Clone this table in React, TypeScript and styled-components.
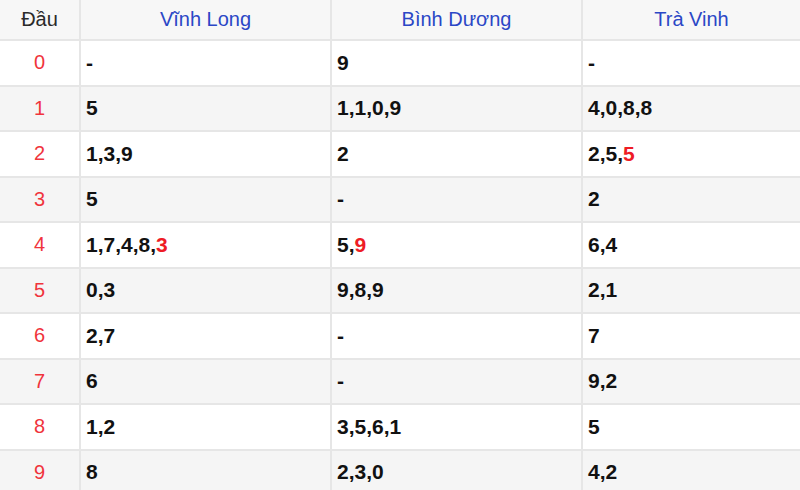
import React from "react";
import styled, { createGlobalStyle } from "styled-components";

const Global = createGlobalStyle`
  html, body { margin: 0; padding: 0; background: #fff; }
  body { font-family: "Liberation Sans", Arial, sans-serif; }
`;

const Table = styled.table`
  width: 800px;
  border-collapse: collapse;
  table-layout: fixed;
  font-family: "Liberation Sans", Arial, sans-serif;
`;

const HeadRow = styled.tr`
  background: #f7f7f7;
  height: 40px;
`;

const HeadCell = styled.th<{ $plain?: boolean }>`
  font-weight: normal;
  font-size: 20px;
  color: ${(p) => (p.$plain ? "#2a2a2a" : "#2b47c6")};
  text-align: center;
  padding: 0;
  border: 2px solid #e6e6e6;
  border-top: none;
  &:first-child { border-left: none; }
  &:last-child { border-right: none; }
`;

const Row = styled.tr<{ $striped: boolean }>`
  background: ${(p) => (p.$striped ? "#f5f5f5" : "#fff")};
  height: 45.5px;
`;

const KeyCell = styled.td`
  text-align: center;
  font-size: 20px;
  color: #f0343c;
  padding: 0;
  border: 2px solid #e6e6e6;
  border-left: none;
`;

const ValueCell = styled.td`
  font-size: 21px;
  font-weight: bold;
  color: #111;
  padding: 0 0 0 5px;
  border: 2px solid #e6e6e6;
  &:last-child { border-right: none; }
`;

const Hit = styled.span`
  color: #ee1c25;
`;

type Cell = { v: string; hit?: string };

const rows: Cell[][] = [
  [{ v: "-" }, { v: "9" }, { v: "-" }],
  [{ v: "5" }, { v: "1,1,0,9" }, { v: "4,0,8,8" }],
  [{ v: "1,3,9" }, { v: "2" }, { v: "2,5,", hit: "5" }],
  [{ v: "5" }, { v: "-" }, { v: "2" }],
  [{ v: "1,7,4,8,", hit: "3" }, { v: "5,", hit: "9" }, { v: "6,4" }],
  [{ v: "0,3" }, { v: "9,8,9" }, { v: "2,1" }],
  [{ v: "2,7" }, { v: "-" }, { v: "7" }],
  [{ v: "6" }, { v: "-" }, { v: "9,2" }],
  [{ v: "1,2" }, { v: "3,5,6,1" }, { v: "5" }],
  [{ v: "8" }, { v: "2,3,0" }, { v: "4,2" }],
];

export default function App() {
  return (
    <>
      <Global />
      <Table>
        <colgroup>
          <col style={{ width: 80 }} />
          <col style={{ width: 251 }} />
          <col style={{ width: 251 }} />
          <col style={{ width: 218 }} />
        </colgroup>
        <thead>
          <HeadRow>
            <HeadCell $plain>Đầu</HeadCell>
            <HeadCell>Vĩnh Long</HeadCell>
            <HeadCell>Bình Dương</HeadCell>
            <HeadCell>Trà Vinh</HeadCell>
          </HeadRow>
        </thead>
        <tbody>
          {rows.map((r, i) => (
            <Row key={i} $striped={i % 2 === 1}>
              <KeyCell>{i}</KeyCell>
              {r.map((c, j) => (
                <ValueCell key={j}>
                  {c.v}
                  {c.hit && <Hit>{c.hit}</Hit>}
                </ValueCell>
              ))}
            </Row>
          ))}
        </tbody>
      </Table>
    </>
  );
}
